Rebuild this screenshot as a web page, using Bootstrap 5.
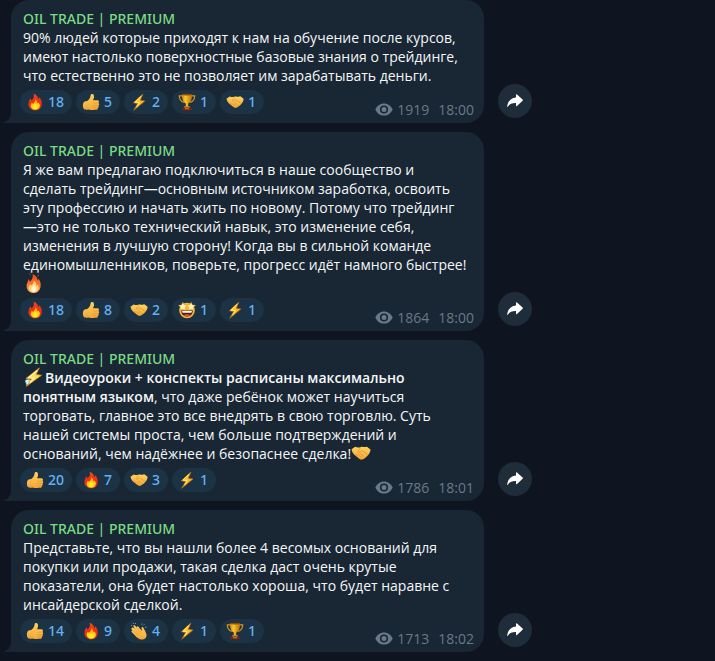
<!DOCTYPE html>
<html lang="ru">
<head>
<meta charset="utf-8">
<meta name="viewport" content="width=device-width, initial-scale=1">
<title>OIL TRADE | PREMIUM</title>
<link href="https://cdn.jsdelivr.net/npm/bootstrap@5.3.0/dist/css/bootstrap.min.css" rel="stylesheet">
<style>
  body { background: #0e1520; color: #f5f7f8; font: 14px/19px "Open Sans", "Noto Sans", sans-serif; }
  .feed { padding: 0 12px 9px 11px; gap: 9px; }
  .feed-row { gap: 14px; }
  .bubble { width: 473px; min-width: 0; padding: 9px 10px 9px 12px; background: #192633; border-radius: 18px 18px 18px 0; }
  .bubble::before { content: ""; position: absolute; left: -7px; bottom: 0; width: 7px; height: 10px; background: radial-gradient(ellipse 7px 9px at 0 0, transparent 96%, #192633 100%); }
  .author { color: #7bdb85; font-family: "Noto Sans", sans-serif; font-size: 14px; line-height: 19px; font-weight: 500; }
  .author a { color: inherit; }
  .message strong { font-weight: 600; }
  .bubble-foot { margin: 5px 0 0 -3px; }
  .reactions { gap: 4px; }
  .reaction { height: 24px; padding: 0 8px 0 6px; gap: 4px; border: 0; border-radius: 12px; background: #1c3345; color: #65b1f3; font-family: "Noto Sans", sans-serif; font-weight: 500; line-height: 24px; }
  .reaction svg { width: 18px; height: 18px; }
  .meta { color: #687989; gap: 4px; height: 19px; margin-bottom: -5px; white-space: nowrap; }
  .meta svg { width: 18px; height: 13px; }
  .meta time { margin-left: 5px; }
  .share { width: 34px; height: 34px; margin-bottom: 5px; border: 0; border-radius: 50%; background: #1f2c39; color: #fff; }
  .share svg { width: 16px; height: 14px; }
  .inline-emoji { width: 20px; height: 20px; margin: -4px 0 0; vertical-align: -4px; }
  .inline-emoji.lead-in { margin-right: 2px; }
</style>
<script src="https://cdn.jsdelivr.net/npm/bootstrap@5.3.0/dist/js/bootstrap.bundle.min.js"></script>
</head>
<body>
<svg width="0" height="0" class="position-absolute" aria-hidden="true">
  <defs>
    <linearGradient id="gFire" x1="0" y1="0" x2="0" y2="1"><stop offset="0" stop-color="#f04a1c"/><stop offset=".55" stop-color="#f22a12"/><stop offset="1" stop-color="#e8361a"/></linearGradient>
    <linearGradient id="gCore" x1="0" y1="0" x2="0" y2="1"><stop offset="0" stop-color="#ff9b12"/><stop offset=".6" stop-color="#ffd715"/><stop offset="1" stop-color="#ffc21a"/></linearGradient>
    <linearGradient id="gSoft" x1="0" y1="0" x2="0" y2="1"><stop offset="0" stop-color="#e94a1c"/><stop offset=".5" stop-color="#fb7228"/><stop offset="1" stop-color="#ffab55"/></linearGradient>
    <linearGradient id="gSkin" x1="0" y1="0" x2="0" y2="1"><stop offset="0" stop-color="#ffd25c"/><stop offset="1" stop-color="#f5a638"/></linearGradient>
    <linearGradient id="gGold" x1="0" y1="0" x2="1" y2="0"><stop offset="0" stop-color="#c98208"/><stop offset=".35" stop-color="#fcc62b"/><stop offset="1" stop-color="#b76d05"/></linearGradient>
    <linearGradient id="gBolt" x1="0" y1="0" x2="1" y2="1"><stop offset="0" stop-color="#ffe04a"/><stop offset="1" stop-color="#f5a31a"/></linearGradient>
  </defs>
  <symbol id="fire" viewBox="0 0 18 18">
    <path d="M7.600.8C11 2 12.300 4.200 12.200 6.300c.8-.4 1-1.300.9-2.200 1.700 1.800 3 4.400 2.700 7.100-.3 3.800-3 6.100-6.600 6.100S2.400 14.700 2.400 11.200c0-2.500 1.300-3.800 1.700-5.900.8.6 1.200 1.300 1.300 2.100C8 5.700 8.500 3.200 7.600.8z" fill="url(#gFire)"/>
    <path d="M9.300 6.200c1.800 1.200 2.300 2.900 2.100 4.400.6-.3.9-.8 1-1.400 1.300 1.500 1.800 3.200 1.200 4.800-.7 1.800-2.300 2.800-4.400 2.800-2.500 0-4.400-1.500-4.500-3.700-.1-1.500.7-2.600 1.300-3.600.2.600.5 1 .9 1.200 1.500-.9 2.500-2.600 2.400-4.500z" fill="url(#gCore)"/>
    <path d="M9.200 11c1.800 1.100 2.500 2.500 2.100 3.800-.3 1-1.100 1.500-2.200 1.500s-2-.6-2.200-1.600c-.2-1.300 1.700-2 2.300-3.700z" fill="#ffec20"/>
  </symbol>
  <symbol id="flame" viewBox="0 0 20 20">
    <path d="M9.500 1c3.500 1.300 5.200 3.600 5 6.400.8-.3 1-1.100 1-1.800 1.600 2.200 2.500 4.600 2.100 7.600-.4 4-3.200 6.700-6.800 6.700-4 0-7-2.700-7.200-6.500-.1-3 1.400-4.700 2-7.100.9.7 1.200 1.500 1.200 2.400C9.600 6.400 10.300 3.600 9.500 1z" fill="url(#gSoft)"/>
    <path d="M10.800 7.500c2.200 1.800 2.800 3.600 2.500 5.300.8-.3 1.200-1 1.300-1.600 1.300 2.400 1.300 4.600.1 6.300-1 1.400-2.300 2-4 2-2.900 0-4.900-1.900-5-4.400 0-1.600.8-2.900 1.500-3.900.2.700.5 1.100 1 1.300 1.700-1.200 2.700-3 2.600-5z" fill="#ffd27b"/>
    <path d="M10.700 12c2 1.700 2.700 3.300 2.200 4.900-.4 1.300-1.200 1.900-2.400 1.900s-2.300-.7-2.500-2c-.2-1.700 2.100-2.600 2.700-4.800z" fill="#fff5cf"/>
    <path d="M7.500 1.600l-1.200-1M14.700 3.400l1-1.700" stroke="#dc411d" fill="none"/>
  </symbol>
  <symbol id="thumb" viewBox="0 0 18 18">
    <path d="M1.700 9.300c.8-.9 2.200-1 3.500-1.200C6.900 6.700 8.300 5 8.600 2.400 8.700 1.300 9.300.8 10.200.9c1.500.2 2 1.700 1.800 3.300-.1 1-.5 2-.9 3h4.300c1.500 0 2.200 1.700 1.100 2.700.9.700.9 1.900 0 2.500.6.900.2 2-.7 2.300.3 1.200-.4 2-1.600 2.100-2.800.2-5.600.2-7.700-.4-1.200.4-3.300.4-4.400-.1C.5 14.900.5 11 1.700 9.300z" fill="url(#gSkin)"/>
    <path d="M11.200 10.100c1.800.2 3.500.2 5.100-.2m-5 2.600c1.500.3 3.300.2 4.800-.1m-4.600 2.300c1.400.2 2.700.2 4 0M6.300 15.900c-1.200-.3-1.700-1-2-1.900" fill="none" stroke="#d98a2b" stroke-width=".5"/>
  </symbol>
  <symbol id="bolt" viewBox="0 0 18 18">
    <path d="M12.900 1L3.200 9.700l4.400.9-3.900 6.700L15 8.100l-4.700-.9z" fill="url(#gBolt)" stroke="#b9640c" stroke-width=".8" stroke-linejoin="round"/>
    <path d="M11.300 3L5.100 9l4 .8-2.600 4.300" fill="none" stroke="#fff082" stroke-width=".9"/>
  </symbol>
  <symbol id="spark" viewBox="0 0 20 20">
    <path d="M1.800 13.800L6 12l2.400 1.700-4.700 4.800z" fill="#9fd7df"/>
    <path d="M16.300 1L3 11.400l5.500.6-5.200 7.300L18.500 8.300l-5.600-.7z" fill="#ffdc55" stroke="#e79524" stroke-width=".8" stroke-linejoin="round"/>
    <path d="M14.300 3.400L6 10.500l5 .4-3.700 4.600" fill="none" stroke="#fff6af" stroke-width="1.200"/>
    <path d="M2.800 13l2.400.5-1.800 1 2 .6-1.300 1.800" fill="none" stroke="#edffff" stroke-width=".9"/>
  </symbol>
  <symbol id="cup" viewBox="0 0 18 18">
    <path d="M4.500 2.800H1.300c0 3.600 1.500 5.800 4.600 6.500M13.500 2.800h3.200c0 3.600-1.500 5.800-4.600 6.500" fill="none" stroke="#d99612" stroke-width="1.200"/>
    <path d="M3.900 1.300h10.200c.1 4.900-1.300 8.200-3.900 9.100v3.200H7.800v-3.200c-2.600-.9-4-4.200-3.900-9.100z" fill="url(#gGold)"/>
    <ellipse cx="9" cy="1.600" rx="5.100" ry=".9" fill="#8b4a06"/>
    <path d="M6.500 13.200h5l.8 1.500H5.700z" fill="#e29d24"/>
    <path d="M5 14.500h8l1 2.800H4z" fill="#7b2613"/>
    <path d="M7 15.200h4v1.100H7z" fill="#d17b25"/>
  </symbol>
  <symbol id="shake" viewBox="0 0 18 18">
    <path d="M.5 5.700l3.200-2.300c1.700.9 3.300.9 5 .2 1.900-.6 3.700.7 5.600-.3l3.300 2.500c-.1 2-.9 3.600-2.100 5-1.300 1.700-3.100 3.200-5.200 4-1.100.4-2 0-2.900-.7l-4.400-3.600C1.700 9.200.8 7.600.5 5.700z" fill="url(#gSkin)"/>
    <path d="M8.900 3.800L6.100 7.500c.8 1 2.500.5 3.800-.7l5 3.400M8.400 9.300l3.500 3.100M6.700 10.600l3.100 2.900M4 9.400l2 2.400" fill="none" stroke="#d98b2e" stroke-width=".6"/>
  </symbol>
  <symbol id="starface" viewBox="0 0 18 18">
    <circle cx="9" cy="9.500" r="7.800" fill="#f8b63d"/>
    <path d="M3.200 9.500h11.600c0 3.600-2.200 6-5.800 6s-5.800-2.400-5.800-6z" fill="#542012"/>
    <path d="M4 9.900h10l-.6 1.900H4.600z" fill="#fff"/>
    <path d="M5.500 14.200c2-1.300 5-1.300 7 0-1.900 1.500-5 1.500-7 0z" fill="#ec4e43"/>
    <path id="eyestar" d="M4.900 1.200l1.400 2.700 3 .4-2.200 2.100.5 3-2.700-1.400-2.700 1.400.5-3L.5 4.300l3-.4z" fill="#fff3a8" stroke="#c98a2a" stroke-width=".4"/>
    <use href="#eyestar" x="8.200"/>
  </symbol>
  <symbol id="clap" viewBox="0 0 18 18">
    <path d="M2.100 5.700c.6-.6 1.200-.2 1.800.4l1.300 1.200-1.700-2.900c-.5-1 .7-1.700 1.400-.9l2 2.200c-.5-1.200.7-1.900 1.400-1l3.800 4.200-.6-2.600c-.2-1.300 1.300-1.700 1.900-.6 1.400 2.700 3.200 5.400 3.200 7.700 0 2.200-2.300 4.100-5 4.100-2.500 0-4.700-1.800-6.900-4.200l-3-3.400c-.6-.8.100-1.600.9-1.100-.7-.9-1.600-1.800-1.200-2.400z" fill="url(#gSkin)"/>
    <path d="M4.800 7.200l4.300 4.300M6.900 6l4.200 4.600M3.700 9.100l4.200 4" stroke="#d98b2e" stroke-width=".5" fill="none"/>
    <path d="M1 3.300l1 .5M3.100.8l.4 1.200M5.600 1l-.2 1M12.200 1.500l-.5 1.200M14.500 2.400l-1 .8M16.500 5.200l-1.400.1" stroke="#a6b0b5" stroke-width=".8" fill="none"/>
  </symbol>
  <symbol id="eye" viewBox="0 0 18 13">
    <path fill="#687989" fill-rule="evenodd" d="M9 .4c4 0 7 2.300 8.700 6.100C16 10.300 13 12.600 9 12.600S2 10.300.3 6.500C2 2.700 5 .4 9 .4zM9 2.400a4.100 4.100 0 100 8.200 4.100 4.100 0 000-8.200z"/>
    <circle cx="9" cy="6.500" r="2.500" fill="#687989"/>
  </symbol>
  <symbol id="forward" viewBox="0 0 16 14">
    <path d="M9 .8c0-.6.6-.8 1-.4l5.600 5.100c.4.400.4.800 0 1.200L10 12c-.4.400-1 .2-1-.4V9.100C5.200 9 2.600 10 .8 12.700c-.3.400-.7.200-.6-.3C.9 7 4 3.800 9 3.400z" fill="currentColor"/>
  </symbol>
</svg>

<main class="feed d-flex flex-column">
  <article class="feed-row d-flex align-items-end">
    <div class="bubble position-relative">
      <h2 class="author m-0"><a href="#" class="text-decoration-none">OIL TRADE | PREMIUM</a></h2>
      <p class="message m-0">90% людей которые приходят к нам на обучение после курсов, имеют настолько поверхностные базовые знания о трейдинге, что естественно это не позволяет им зарабатывать деньги.</p>
      <div class="bubble-foot d-flex justify-content-between align-items-end">
        <div class="reactions d-flex">
          <button type="button" class="reaction d-flex align-items-center"><svg><use href="#fire"/></svg>18</button>
          <button type="button" class="reaction d-flex align-items-center"><svg><use href="#thumb"/></svg>5</button>
          <button type="button" class="reaction d-flex align-items-center"><svg><use href="#bolt"/></svg>2</button>
          <button type="button" class="reaction d-flex align-items-center"><svg><use href="#cup"/></svg>1</button>
          <button type="button" class="reaction d-flex align-items-center"><svg><use href="#shake"/></svg>1</button>
        </div>
        <div class="meta d-flex align-items-center"><svg><use href="#eye"/></svg><span>1919</span><time>18:00</time></div>
      </div>
    </div>
    <button type="button" class="share d-flex align-items-center justify-content-center flex-shrink-0 p-0" aria-label="Переслать"><svg><use href="#forward"/></svg></button>
  </article>

  <article class="feed-row d-flex align-items-end">
    <div class="bubble position-relative">
      <h2 class="author m-0"><a href="#" class="text-decoration-none">OIL TRADE | PREMIUM</a></h2>
      <p class="message m-0">Я же вам предлагаю подключиться в наше сообщество и<br>сделать трейдинг—основным источником заработка, освоить<br>эту профессию и начать жить по новому. Потому что трейдинг<br>—это не только технический навык, это изменение себя,<br>изменения в лучшую сторону! Когда вы в сильной команде единомышленников, поверьте, прогресс идёт намного быстрее!<wbr><svg class="inline-emoji"><use href="#flame"/></svg></p>
      <div class="bubble-foot d-flex justify-content-between align-items-end">
        <div class="reactions d-flex">
          <button type="button" class="reaction d-flex align-items-center"><svg><use href="#fire"/></svg>18</button>
          <button type="button" class="reaction d-flex align-items-center"><svg><use href="#thumb"/></svg>8</button>
          <button type="button" class="reaction d-flex align-items-center"><svg><use href="#shake"/></svg>2</button>
          <button type="button" class="reaction d-flex align-items-center"><svg><use href="#starface"/></svg>1</button>
          <button type="button" class="reaction d-flex align-items-center"><svg><use href="#bolt"/></svg>1</button>
        </div>
        <div class="meta d-flex align-items-center"><svg><use href="#eye"/></svg><span>1864</span><time>18:00</time></div>
      </div>
    </div>
    <button type="button" class="share d-flex align-items-center justify-content-center flex-shrink-0 p-0" aria-label="Переслать"><svg><use href="#forward"/></svg></button>
  </article>

  <article class="feed-row d-flex align-items-end">
    <div class="bubble position-relative">
      <h2 class="author m-0"><a href="#" class="text-decoration-none">OIL TRADE | PREMIUM</a></h2>
      <p class="message m-0"><svg class="inline-emoji lead-in"><use href="#spark"/></svg><strong>Видеоуроки + конспекты расписаны максимально понятным языком</strong>, что даже ребёнок может научиться торговать, главное это все внедрять в свою торговлю. Суть нашей системы проста, чем больше подтверждений и оснований, чем надёжнее и безопаснее сделка!<svg class="inline-emoji"><use href="#shake"/></svg></p>
      <div class="bubble-foot d-flex justify-content-between align-items-end">
        <div class="reactions d-flex">
          <button type="button" class="reaction d-flex align-items-center"><svg><use href="#thumb"/></svg>20</button>
          <button type="button" class="reaction d-flex align-items-center"><svg><use href="#fire"/></svg>7</button>
          <button type="button" class="reaction d-flex align-items-center"><svg><use href="#shake"/></svg>3</button>
          <button type="button" class="reaction d-flex align-items-center"><svg><use href="#bolt"/></svg>1</button>
        </div>
        <div class="meta d-flex align-items-center"><svg><use href="#eye"/></svg><span>1786</span><time>18:01</time></div>
      </div>
    </div>
    <button type="button" class="share d-flex align-items-center justify-content-center flex-shrink-0 p-0" aria-label="Переслать"><svg><use href="#forward"/></svg></button>
  </article>

  <article class="feed-row d-flex align-items-end">
    <div class="bubble position-relative">
      <h2 class="author m-0"><a href="#" class="text-decoration-none">OIL TRADE | PREMIUM</a></h2>
      <p class="message m-0">Представьте, что вы нашли более 4 весомых оснований для покупки или продажи, такая сделка даст очень крутые показатели, она будет настолько хороша, что будет наравне с инсайдерской сделкой.</p>
      <div class="bubble-foot d-flex justify-content-between align-items-end">
        <div class="reactions d-flex">
          <button type="button" class="reaction d-flex align-items-center"><svg><use href="#thumb"/></svg>14</button>
          <button type="button" class="reaction d-flex align-items-center"><svg><use href="#fire"/></svg>9</button>
          <button type="button" class="reaction d-flex align-items-center"><svg><use href="#clap"/></svg>4</button>
          <button type="button" class="reaction d-flex align-items-center"><svg><use href="#bolt"/></svg>1</button>
          <button type="button" class="reaction d-flex align-items-center"><svg><use href="#cup"/></svg>1</button>
        </div>
        <div class="meta d-flex align-items-center"><svg><use href="#eye"/></svg><span>1713</span><time>18:02</time></div>
      </div>
    </div>
    <button type="button" class="share d-flex align-items-center justify-content-center flex-shrink-0 p-0" aria-label="Переслать"><svg><use href="#forward"/></svg></button>
  </article>
</main>
</body>
</html>
